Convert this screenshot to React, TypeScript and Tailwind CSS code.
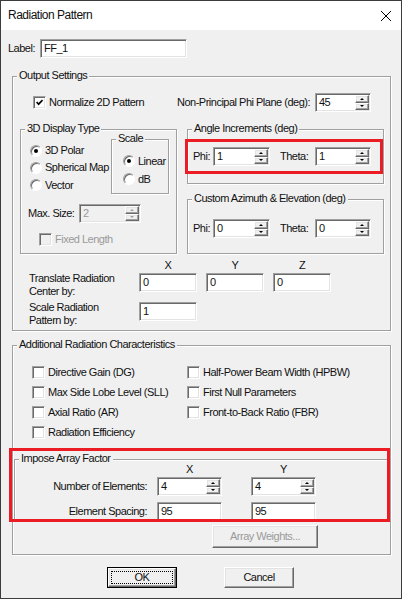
import React from "react";

const sunken =
  "border border-t-[#a0a0a0] border-l-[#a0a0a0] border-b-white border-r-white shadow-[inset_1px_1px_0_#696969,inset_-1px_-1px_0_#e3e3e3]";
const raised =
  "border border-t-white border-l-white border-b-[#696969] border-r-[#696969] shadow-[inset_-1px_-1px_0_#a0a0a0,inset_1px_1px_0_#e3e3e3]";

type Kids = { children?: React.ReactNode; className?: string };

const Edit = ({ value, w, disabled }: { value: string; w: string; disabled?: boolean }) => (
  <div
    className={`${sunken} ${w} h-[19px] flex items-center pl-[3px] ${
      disabled ? "bg-[#f0f0f0] text-[#9a9a9a]" : "bg-white"
    }`}
  >
    {value}
  </div>
);

const Arrow = ({ up, disabled }: { up?: boolean; disabled?: boolean }) => (
  <svg width="4" height="2" viewBox="0 0 4 2">
    <path d={up ? "M2 0 L4 2 L0 2 Z" : "M0 0 L4 0 L2 2 Z"} fill={disabled ? "#a0a0a0" : "#000"} />
  </svg>
);

const Spin = ({ value, w, disabled }: { value: string; w: string; disabled?: boolean }) => (
  <div
    className={`${sunken} ${w} h-[19px] flex ${disabled ? "bg-[#f0f0f0] text-[#9a9a9a]" : "bg-white"}`}
  >
    <div className="flex-1 flex items-center pl-[3px]">{value}</div>
    <div className="flex flex-col w-[15px] py-px pr-px">
      <div className={`${raised} flex-1 bg-[#f0f0f0] flex items-center justify-center`}>
        <Arrow up disabled={disabled} />
      </div>
      <div className={`${raised} flex-1 bg-[#f0f0f0] flex items-center justify-center`}>
        <Arrow disabled={disabled} />
      </div>
    </div>
  </div>
);

const Check = ({ label, checked, disabled }: { label: string; checked?: boolean; disabled?: boolean }) => (
  <div className={`flex items-center gap-[3px] ${disabled ? "text-[#9a9a9a]" : ""}`}>
    <div
      className={`${sunken} w-[13px] h-[13px] flex items-center justify-center ${
        disabled ? "bg-[#f0f0f0]" : "bg-white"
      }`}
    >
      {checked && (
        <svg width="7" height="7" viewBox="0 0 7 7">
          <polyline points="0.6,3 2.6,5.2 6.6,1" fill="none" stroke="#000" strokeWidth="1.7" />
        </svg>
      )}
    </div>
    <span className="whitespace-nowrap">{label}</span>
  </div>
);

const Radio = ({ label, checked }: { label: string; checked?: boolean }) => (
  <div className="flex items-center gap-[3px] h-[18px]">
    <div className="w-[12px] h-[12px] rounded-full border border-t-[#a0a0a0] border-l-[#a0a0a0] border-b-white border-r-white bg-white shadow-[inset_1px_1px_0_#696969] flex items-center justify-center">
      {checked && <div className="w-[4px] h-[4px] rounded-full bg-black" />}
    </div>
    <span className="whitespace-nowrap">{label}</span>
  </div>
);

const Group = ({ title, className, children }: Kids & { title: string }) => (
  <div className={`relative border border-[#a0a0a0] shadow-[inset_1px_1px_0_#fff,1px_1px_0_#fff] ${className}`}>
    <span className="absolute -top-[8px] left-[4px] px-[2px] bg-[#f0f0f0] whitespace-nowrap leading-[13px]">
      {title}
    </span>
    {children}
  </div>
);

const RedBox = ({ className }: { className: string }) => (
  <div className={`absolute border-[3px] border-[#ec1c24] pointer-events-none ${className}`} />
);

const Button = ({ children, className, disabled }: Kids & { disabled?: boolean }) => (
  <div
    className={`${raised} bg-[#f0f0f0] flex items-center justify-center ${
      disabled ? "text-[#9a9a9a]" : ""
    } ${className}`}
  >
    {children}
  </div>
);

export default function App() {
  return (
    <div className="w-[402px] h-[599px] border border-[#3c3c3c] bg-[#f0f0f0] flex flex-col text-[11px] leading-[13px] tracking-[-0.5px] text-[#111] font-['Liberation_Sans',Arial,sans-serif]">
      {/* title bar */}
      <div className="h-[29px] bg-white flex items-center justify-between pl-[7px] pr-[10px] shrink-0">
        <span className="text-[12px] tracking-[-0.5px]">Radiation Pattern</span>
        <svg width="10" height="10" viewBox="0 0 10 10">
          <path d="M0 0 L10 10 M10 0 L0 10" stroke="#000" strokeWidth="1" />
        </svg>
      </div>

      {/* label */}
      <div className="mt-[9px] h-[19px] pl-[7px] flex items-center">
        <span className="w-[32px]">Label:</span>
        <Edit value="FF_1" w="w-[147px]" />
      </div>

      {/* output settings */}
      <Group title="Output Settings" className="mt-[18px] ml-[11px] w-[379px] h-[255px] shrink-0">
        <div className="flex flex-col">
          <div className="mt-[16px] h-[19px] flex items-center">
            <div className="ml-[20px] w-[144px]">
              <Check label="Normalize 2D Pattern" checked />
            </div>
            <span className="whitespace-nowrap">Non-Principal Phi Plane (deg):</span>
            <div className="ml-auto mr-[19px]">
              <Spin value="45" w="w-[56px]" />
            </div>
          </div>

          <div className="mt-[17px] pl-[7px] flex gap-[10px]">
            <Group title="3D Display Type" className="w-[157px] h-[125px]">
              <div className="flex h-[64px]">
                <div className="w-[90px] pt-[12px] pl-[9px] flex flex-col">
                  <Radio label="3D Polar" checked />
                  <Radio label="Spherical Map" />
                  <Radio label="Vector" />
                </div>
                <Group title="Scale" className="mt-[9px] w-[58px] h-[55px]">
                  <div className="pt-[12px] pl-[11px] flex flex-col">
                    <Radio label="Linear" checked />
                    <Radio label="dB" />
                  </div>
                </Group>
              </div>
              <div className="mt-[10px] h-[19px] pl-[7px] flex items-center">
                <span className="w-[51px]">Max. Size:</span>
                <Spin value="2" w="w-[62px]" disabled />
              </div>
              <div className="mt-[10px] h-[13px] pl-[18px] flex items-center">
                <Check label="Fixed Length" disabled />
              </div>
            </Group>

            <div className="w-[197px] flex flex-col">
              <Group title="Angle Increments (deg)" className="h-[55px]">
                <RedBox className="-left-[3px] top-[9px] w-[198px] h-[35px]" />
                <div className="mt-[17px] h-[19px] pl-[5px] flex items-center">
                  <span className="w-[20px]">Phi:</span>
                  <Spin value="1" w="w-[57px]" />
                  <span className="ml-[10px] w-[35px]">Theta:</span>
                  <Spin value="1" w="w-[56px]" />
                </div>
              </Group>
              <Group title="Custom Azimuth & Elevation (deg)" className="mt-[15px] h-[55px]">
                <div className="mt-[19px] h-[19px] pl-[5px] flex items-center">
                  <span className="w-[20px]">Phi:</span>
                  <Spin value="0" w="w-[57px]" />
                  <span className="ml-[10px] w-[35px]">Theta:</span>
                  <Spin value="0" w="w-[56px]" />
                </div>
              </Group>
            </div>
          </div>

          <div className="mt-[5px] h-[13px] flex">
            <div className="w-[126px]" />
            <div className="flex gap-[9px]">
              <span className="w-[58px] text-center">X</span>
              <span className="w-[58px] text-center">Y</span>
              <span className="w-[58px] text-center">Z</span>
            </div>
          </div>
          <div className="mt-[1px] flex items-start">
            <div className="ml-[16px] w-[110px] -mt-px">
              Translate Radiation
              <br />
              Center by:
            </div>
            <div className="flex gap-[9px]">
              <Edit value="0" w="w-[58px]" />
              <Edit value="0" w="w-[58px]" />
              <Edit value="0" w="w-[58px]" />
            </div>
          </div>
          <div className="mt-[4px] flex items-start">
            <div className="ml-[16px] w-[110px] -mt-px">
              Scale Radiation
              <br />
              Pattern by:
            </div>
            <Edit value="1" w="w-[58px]" />
          </div>
        </div>
      </Group>

      {/* additional radiation characteristics */}
      <Group
        title="Additional Radiation Characteristics"
        className="mt-[14px] ml-[11px] w-[379px] h-[210px] shrink-0"
      >
        <div className="mt-[16px] pl-[19px] grid grid-cols-[155px_1fr] auto-rows-[20px] items-center">
          <Check label="Directive Gain (DG)" />
          <Check label="Half-Power Beam Width (HPBW)" />
          <Check label="Max Side Lobe Level (SLL)" />
          <Check label="First Null Parameters" />
          <Check label="Axial Ratio (AR)" />
          <Check label="Front-to-Back Ratio (FBR)" />
          <Check label="Radiation Efficiency" />
        </div>

        <Group title="Impose Array Factor" className="mt-[17px] ml-[1px] w-[374px] h-[61px]">
          <div className="mt-[3px] h-[13px] flex">
            <div className="w-[142px]" />
            <span className="w-[65px] text-center">X</span>
            <span className="ml-[29px] w-[65px] text-center">Y</span>
          </div>
          <div className="mt-[1px] h-[19px] flex items-center">
            <span className="w-[132px] text-right">Number of Elements:</span>
            <div className="ml-[10px]">
              <Spin value="4" w="w-[65px]" />
            </div>
            <div className="ml-[29px]">
              <Spin value="4" w="w-[65px]" />
            </div>
          </div>
          <div className="mt-[6px] h-[19px] flex items-center">
            <span className="w-[132px] text-right">Element Spacing:</span>
            <div className="ml-[10px]">
              <Edit value="95" w="w-[65px]" />
            </div>
            <div className="ml-[29px]">
              <Edit value="95" w="w-[65px]" />
            </div>
          </div>
        </Group>
        <RedBox className="-left-[4px] top-[102px] w-[381px] h-[74px]" />

        <Button disabled className="mt-[5px] ml-[199px] w-[106px] h-[23px]">
          Array Weights...
        </Button>
      </Group>

      {/* dialog buttons */}
      <div className="mt-[12px] pl-[106px] flex">
        <div className="w-[70px] h-[21px] border border-black flex">
          <Button className="flex-1 p-[2px]">
            <div className="w-full h-full border border-dotted border-black flex items-center justify-center">
              OK
            </div>
          </Button>
        </div>
        <Button className="ml-[47px] w-[70px] h-[21px]">Cancel</Button>
      </div>
    </div>
  );
}
